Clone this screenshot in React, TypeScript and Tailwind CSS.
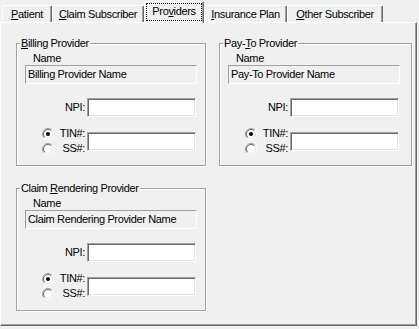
import { ReactNode } from 'react'

/**
 * Tab of the classic tab strip.
 */
function Tab({ children, width, selected }: { children: ReactNode; width: string; selected?: boolean }): ReactNode {
	if (selected)
		return (
			<div
				className={`relative z-10 -mb-px h-[22px] ${width} rounded-t-[2px] border-t border-r border-l border-white border-r-[#696969] bg-[#f0f0f0] px-px pt-px shadow-[inset_-1px_0_0_#a0a0a0]`}
			>
				<div className="flex h-[18px] justify-center border border-dotted border-black pt-px">{children}</div>
			</div>
		)

	return (
		<div
			className={`flex h-[17px] ${width} justify-center rounded-t-[2px] border-t border-r border-l border-white border-r-[#696969] pt-[2px] shadow-[inset_-1px_0_0_#a0a0a0]`}
		>
			{children}
		</div>
	)
}

function Input(): ReactNode {
	return (
		<div className="h-[19px] w-[109px] border border-[#a0a0a0] border-r-white border-b-white bg-white shadow-[inset_1px_1px_0_#696969,inset_-1px_-1px_0_#e3e3e3]" />
	)
}

function Radio({ checked }: { checked?: boolean }): ReactNode {
	return (
		<svg width="12" height="12" viewBox="0 0 12 12" className="shrink-0">
			<circle cx="6" cy="6" r="5" fill="#fff" />
			<path d="M2.1 9.9A5.5 5.5 0 0 1 9.9 2.1" stroke="#a0a0a0" fill="none" />
			<path d="M2.8 9.2A4.5 4.5 0 0 1 9.2 2.8" stroke="#696969" fill="none" />
			<path d="M9.9 2.1A5.5 5.5 0 0 1 2.1 9.9" stroke="#fff" fill="none" />
			<path d="M9.2 2.8A4.5 4.5 0 0 1 2.8 9.2" stroke="#e3e3e3" fill="none" />
			{checked && <circle cx="6" cy="6" r="2" fill="#000" />}
		</svg>
	)
}

/**
 * Group box of one provider: name, NPI and TIN / SS number.
 */
function ProviderGroup({ title, name, width }: { title: ReactNode; name: string; width: string }): ReactNode {
	return (
		<fieldset
			className={`${width} h-[129px] border border-[#a0a0a0] p-0 shadow-[1px_1px_0_#fff,inset_1px_1px_0_#fff]`}
		>
			<legend className="ml-[3px] bg-[#f0f0f0] px-px">{title}</legend>

			<div className="px-[8px] pt-[2px]">
				<div className="pl-[8px]">Name</div>
				<div className="h-[19px] w-[172px] border border-[#a0a0a0] border-r-white border-b-white pt-[2px] pl-[2px] whitespace-nowrap">
					{name}
				</div>

				<div className="mt-[14px] flex items-center">
					<div className="w-[62px] pr-[2px] text-right">NPI:</div>
					<Input />
				</div>

				<div className="mt-[15px] flex items-start">
					<div className="-mt-[6px] w-[62px] pr-[2px] pl-[17px]">
						<div className="flex h-[15px] items-center justify-between">
							<Radio checked />
							<span>TIN#:</span>
						</div>
						<div className="flex h-[15px] items-center justify-between">
							<Radio />
							<span>SS#:</span>
						</div>
					</div>
					<Input />
				</div>
			</div>
		</fieldset>
	)
}

export default function App(): ReactNode {
	return (
		<div className="h-[329px] w-[419px] overflow-hidden bg-[#f0f0f0] font-['Liberation_Sans',Arial,sans-serif] text-[11px] leading-[13px] tracking-[-0.35px] text-black">
			<div className="flex h-[22px] items-end pl-[2px]">
				<Tab width="w-[50px]">
					<span>
						<u>P</u>atient
					</span>
				</Tab>
				<Tab width="w-[92px]">
					<span>
						<u>C</u>laim Subscriber
					</span>
				</Tab>
				<Tab width="w-[60px]" selected>
					<span>
						Pro<u>v</u>iders
					</span>
				</Tab>
				<Tab width="w-[83px]">
					<span>
						<u>I</u>nsurance Plan
					</span>
				</Tab>
				<Tab width="w-[96px]">
					<span>
						<u>O</u>ther Subscriber
					</span>
				</Tab>
			</div>

			<div className="flex h-[304px] w-[417px] gap-[13px] border-t border-r border-b border-l border-white border-r-[#696969] border-b-[#696969] pt-[14px] pl-[15px] shadow-[inset_-1px_-1px_0_#a0a0a0]">
				<div className="flex flex-col gap-[16px]">
					<ProviderGroup
						width="w-[188px]"
						title={
							<>
								<u>B</u>illing Provider
							</>
						}
						name="Billing Provider Name"
					/>
					<ProviderGroup
						width="w-[188px]"
						title={
							<>
								Claim <u>R</u>endering Provider
							</>
						}
						name="Claim Rendering Provider Name"
					/>
				</div>
				<ProviderGroup
					width="w-[193px]"
					title={
						<>
							Pay-<u>T</u>o Provider
						</>
					}
					name="Pay-To Provider Name"
				/>
			</div>
		</div>
	)
}
